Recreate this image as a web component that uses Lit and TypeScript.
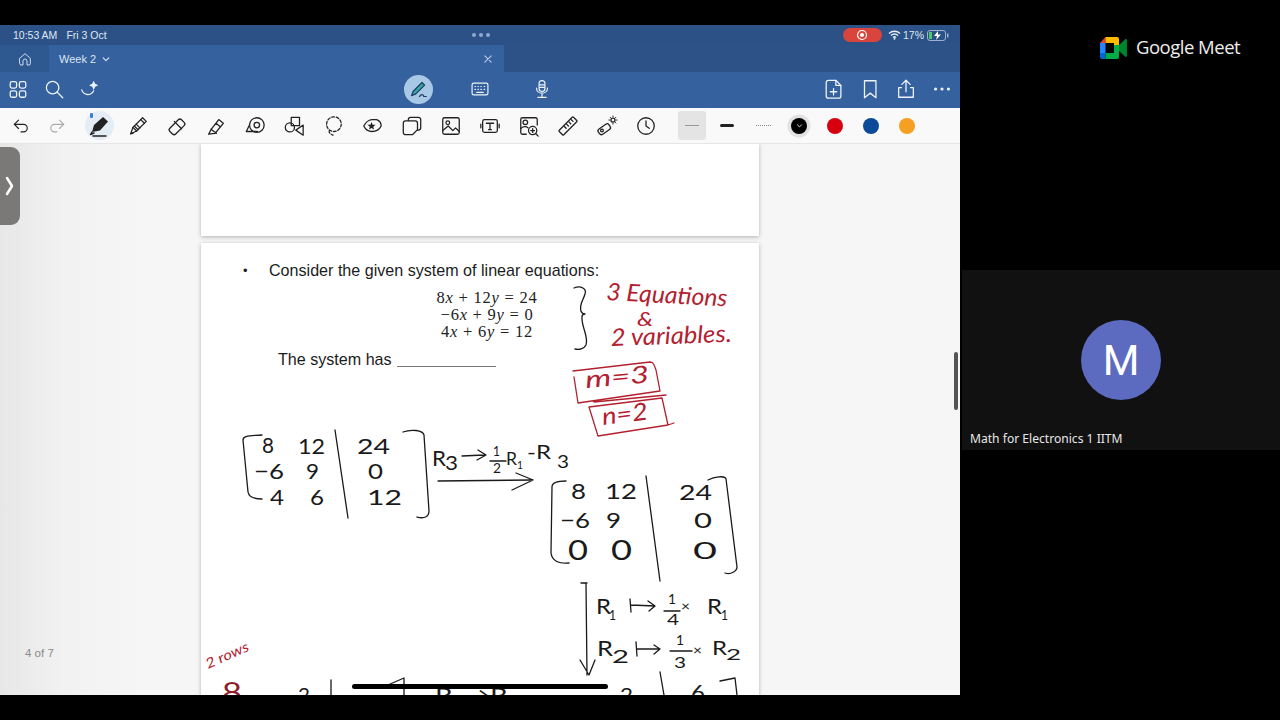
import { LitElement, html, css, svg } from "lit";
import { customElement } from "lit/decorators.js";

const ic = (body: unknown, size = 22, vb = 24) => html`<svg class="ic" width=${size} height=${size} viewBox="0 0 ${vb} ${vb}">${body}</svg>`;

const topLeft = [
  ic(svg`<rect x="3.500" y="4" width="7" height="7" rx="2"/><rect x="13.500" y="4" width="7" height="7" rx="2"/><rect x="3.500" y="14" width="7" height="7" rx="2"/><rect x="13.500" y="14" width="7" height="7" rx="2"/>`),
  ic(svg`<circle cx="10.500" cy="10.500" r="6.800"/><path d="M15.500 15.500l6 6"/>`),
  ic(svg`<path d="M3 13c2 6 10 7 13 1"/><path class="solid" d="M16 3l1.600 3.400L21 8l-3.400 1.600L16 13l-1.600-3.400L11 8l3.400-1.600z"/>`),
];
const topRight = [
  ic(svg`<path d="M6 2.500h8l5.500 5.500v11.500a2.500 2.500 0 0 1-2.500 2.500H6a2.500 2.500 0 0 1-2.500-2.500V5A2.500 2.500 0 0 1 6 2.500z"/><path d="M14 2.500V8h5.500M11.500 11.500v7M8 15h7"/>`),
  ic(svg`<path d="M6 3h12.500v18.500l-6.250-5-6.250 5z"/>`),
  ic(svg`<path d="M12 15V3M7.500 7L12 2.500 16.500 7M7 10.500H4v10.500h16V10.500h-3"/>`),
  ic(svg`<circle class="solid" cx="5" cy="12" r="1.700"/><circle class="solid" cx="12" cy="12" r="1.700"/><circle class="solid" cx="19" cy="12" r="1.700"/>`),
];
const tools = [
  ic(svg`<path d="M9 5L4 10l5 5"/><path d="M4 10h11a4.500 4.500 0 0 1 0 9h-3"/>`, 20),
  ic(svg`<path d="M15 5l5 5-5 5"/><path d="M20 10H9a4.500 4.500 0 0 0 0 9h3"/>`, 20),
];
const tools2 = [
  ic(svg`<path d="M4 20.500l2.500-7L17 3l4 4L10.500 17.500z"/><path d="M4 20.500l3-1M15 5l4 4M6.500 13.500l4 4M10 10l4 4M8 12l4 4"/>`),
  ic(svg`<rect x="3" y="8.500" width="18" height="9" rx="2.500" transform="rotate(-45 12 13)"/><path d="M10 6l8 8" transform="translate(-1 1)"/>`),
  ic(svg`<path d="M4 21l2.500-5 8.500-11 5 4-9 11-5 .5zM6.500 15.500l6 4.500M12 9l5 4"/>`),
  ic(svg`<circle cx="14" cy="11" r="8"/><circle cx="14" cy="11" r="3"/><path d="M6 11l-3.500 7h12"/>`),
  ic(svg`<rect x="9" y="2.500" width="9" height="9"/><circle cx="7.500" cy="13.500" r="5"/><path d="M22 11v11l-8-5.500z"/>`),
  ic(svg`<circle class="dash" cx="13" cy="10" r="8"/><path class="dash" d="M8 17c-1 3 2 4 4 5"/>`),
  ic(svg`<path d="M3 12c2-4 6-7 9-7h5c3 1 5 4 5 7-2 4-6 6-10 6s-7-2-9-6z"/><path class="solid" d="M11.500 7.500l1.200 3 3.200.2-2.500 2 .8 3.100-2.700-1.700-2.700 1.700.8-3.100-2.500-2 3.200-.2z"/>`),
  ic(svg`<path d="M8 6V5a2.500 2.500 0 0 1 2.500-2.500H19A2.500 2.500 0 0 1 21.500 5v9a2.500 2.500 0 0 1-2.500 2.500h-1"/><path d="M5 6.500h10.500A2.500 2.500 0 0 1 18 9v7l-5.500 5.500H5A2.500 2.500 0 0 1 2.500 19V9A2.500 2.500 0 0 1 5 6.500z"/>`),
  ic(svg`<rect x="3" y="3" width="18" height="18" rx="2"/><circle cx="8.500" cy="8.500" r="2"/><path d="M3 17l6-5 5 5 3-3 4 4"/>`),
  ic(svg`<rect x="4" y="5" width="16" height="14" rx="2"/><path d="M8 9h8M12 9v7M10.500 16h3M2 10v4M22 10v4"/>`),
  ic(svg`<path d="M9 21H5a2 2 0 0 1-2-2V5a2 2 0 0 1 2-2h14a2 2 0 0 1 2 2v6"/><circle cx="8" cy="8" r="2.500"/><path d="M3 15c2-3 6-3 8-1"/><circle cx="16" cy="17" r="4.500"/><path d="M14 17h4M16 15v4M19.500 20.500L22 23"/>`),
  ic(svg`<rect x="1" y="8.500" width="22" height="7" rx="1" transform="rotate(-45 12 12)"/><path d="M8 12.500l2 2M10.500 10l2 2M13 7.500l2 2M15.500 5l2 2"/>`),
  ic(svg`<rect x="2" y="12" width="14" height="7" rx="2.500" transform="rotate(-35 9 15.500)"/><circle cx="6.500" cy="17" r="1.500"/><circle cx="18.500" cy="5.500" r="2.200"/><path d="M18.500 1v1M18.500 9v1M14 5.500h1M22 5.500h1M15.500 2.500l.7.7M21 8l.7.7M21.700 2.500l-.7.7" stroke-width="1"/>`),
  ic(svg`<circle cx="12" cy="12" r="9"/><path d="M12 6.500V12l3.500 2.500"/>`),
];

const hw: [number, number, string, number, number, number, string][] = [
  [606, 300, "3 Equations", 24, 121, 3, "red"],
  [637, 326, "&", 20, 16, 0, "red"],
  [611, 346, "2 variables.", 24, 121, -2, "red"],
  [586, 388, "m=3", 24, 64, -5, "red"],
  [603, 425, "n=2", 24, 46, -7, "red"],
  [208, 669, "2 rows", 14, 46, -24, "red"],
  [262, 453, "8", 22, 12, 0, ""],
  [298, 454, "12", 22, 27, 0, ""],
  [357, 454, "24", 22, 33, 0, ""],
  [254, 479, "−6", 22, 30, 0, ""],
  [306, 479, "9", 22, 13, 0, ""],
  [368, 479, "0", 22, 15, 0, ""],
  [270, 505, "4", 22, 14, 0, ""],
  [310, 505, "6", 22, 14, 0, ""],
  [367, 505, "12", 22, 35, 0, ""],
  [432, 466, "R", 22, 14, 0, ""],
  [445, 470, "3", 20, 13, 0, ""],
  [493, 456, "1", 13, 7, 0, ""],
  [493, 473, "2", 13, 8, 0, ""],
  [506, 465, "R", 17, 11, 0, ""],
  [517, 469, "1", 12, 6, 0, ""],
  [527, 459, "-R", 20, 24, 0, ""],
  [557, 468, "3", 18, 12, 0, ""],
  [571, 499, "8", 22, 15, 0, ""],
  [605, 499, "12", 22, 32, 0, ""],
  [679, 500, "24", 22, 33, 0, ""],
  [560, 528, "−6", 22, 30, 0, ""],
  [606, 528, "9", 22, 15, 0, ""],
  [694, 528, "0", 22, 18, 0, ""],
  [568, 560, "0", 26, 20, 0, ""],
  [611, 560, "0", 26, 21, 0, ""],
  [693, 559, "0", 24, 24, 0, ""],
  [596, 614, "R", 21, 15, 0, ""],
  [609, 620, "1", 14, 7, 0, ""],
  [668, 604, "1", 14, 8, 0, ""],
  [667, 625, "4", 15, 12, 0, ""],
  [681, 611, "×", 13, 9, 0, ""],
  [707, 614, "R", 21, 15, 0, ""],
  [721, 620, "1", 14, 7, 0, ""],
  [597, 656, "R", 21, 16, 0, ""],
  [612, 663, "2", 17, 17, 0, ""],
  [676, 645, "1", 13, 8, 0, ""],
  [674, 668, "3", 15, 12, 0, ""],
  [693, 655, "×", 13, 9, 0, ""],
  [712, 655, "R", 20, 15, 0, ""],
  [726, 660, "2", 15, 15, 0, ""],
  [222, 702, "8", 26, 20, 0, "dred"],
  [298, 702, "2", 20, 12, 0, ""],
  [435, 702, "R₂→R₂", 20, 82, 0, ""],
  [620, 702, "2", 20, 13, 0, ""],
  [691, 700, "6", 22, 14, 0, ""],
];

const strokes: [string, string][] = [
  ["M574 288c7-3 13 1 11 6-2 7-6 10-4 17 1 3 4 3 4 3s-3 0-3 3c-1 9 7 20 4 28-2 4-7 5-11 4", ""],
  ["M573 371l77-9c3 0 4 2 6 8l4 21-82 12-4-26M594 402l72-7M589 407l73-9 6 27-70 11-9-29M668 425l6-2", "red"],
  ["M262 435c-10 1-19 0-19 5l5 52c1 6 7 7 14 7M335 430l13 88M403 432c8-3 20-2 21 3l5 76c0 6-5 8-12 6", ""],
  ["M462 456l22-1M478 450l8 5-9 5M490 461h16M438 481l95-1M516 473l17 7-21 10", ""],
  ["M566 481c-7 0-14 1-14 6l-1 66c1 7 6 11 18 10M646 476l14 105M708 480c6-3 17-5 18-1l11 88c0 4-6 8-12 6", ""],
  ["M581 583h6M586 583l1 92M580 660l9 15 6-15", ""],
  ["M630 599l1 13M631 605l24 1M648 601l7 5-6 5M664 611h16", ""],
  ["M636 642l1 14M637 649l23 0M654 645l6 4-6 5M670 651h22", ""],
  ["M331 680v15M381 688l23-10v17M660 672l4 23M720 681l15-3 2 17", ""],
];

@customElement("app-root")
export class AppRoot extends LitElement {
  static styles = css`
    :host { display: block; width: 1280px; height: 720px; background: #000; overflow: hidden; font-family: "Liberation Sans", Arial, sans-serif; }
    .shell { display: flex; width: 1280px; height: 720px; }
    .ipad { width: 960px; display: flex; flex-direction: column; padding: 25px 0; box-sizing: border-box; position: relative; }
    .ic { fill: none; stroke: currentColor; stroke-width: 1.400; stroke-linecap: round; stroke-linejoin: round; display: block; }
    .ic .solid { fill: currentColor; stroke: none; }
    .ic .dash { stroke-dasharray: 3 2; }
    .status { height: 20px; flex: none; display: grid; grid-template-columns: 1fr auto 1fr; align-items: center; background: #2c5187; color: #dfe7f2; font-size: 10.500px; padding: 0 11px 0 13px; }
    .clock { display: flex; gap: 9px; }
    .dots { display: flex; gap: 3px; }
    .dots i { width: 4px; height: 4px; border-radius: 50%; background: #8fa9cc; }
    .sys { display: flex; justify-content: flex-end; align-items: center; gap: 4px; }
    .rec { width: 39px; height: 14px; border-radius: 7px; background: #d9453c; display: flex; align-items: center; justify-content: center; margin-right: 2px; }
    .rec svg, .batt { display: block; }
    .wifi { margin-right: -2px; }
    .pct { margin-right: -1px; }
    .tabs { height: 27px; flex: none; display: flex; background: #2d5288; color: #dbe5f1; }
    .home { width: 49px; background: #2e5890; display: flex; align-items: center; justify-content: center; }
    .tab { width: 455px; background: #35629f; display: flex; align-items: center; padding: 0 12px 0 10px; box-sizing: border-box; font-size: 11px; gap: 6px; }
    .tab .x { margin-left: auto; color: #b9cbe2; }
    .bar { height: 36px; flex: none; display: flex; align-items: center; background: #35629f; color: #eef3f9; padding-bottom: 2px; box-sizing: border-box; }
    .slot { width: 36px; display: flex; justify-content: center; align-items: center; }
    .slot.mid { width: 62px; }
    .center { display: flex; margin-left: 279px; }
    .right { display: flex; margin-left: auto; }
    .pencirc { width: 29px; height: 29px; border-radius: 50%; background: #a9c8e6; display: flex; align-items: center; justify-content: center; color: #1d3d62; }
    .tools { height: 36px; flex: none; display: flex; align-items: center; background: #f9f9f9; color: #222; padding-left: 3px; border-bottom: 1px solid #e6e6e6; box-sizing: border-box; }
    .tools .redo { color: #aaa; }
    .tools .t { width: 39.070px; display: flex; justify-content: center; align-items: center; }
    .penwrap { margin-left: 4.500px; position: relative; }
    .pencur { width: 29px; height: 29px; border-radius: 50%; background: #e4ecf6; display: flex; align-items: center; justify-content: center; position: relative; }
    .bt { position: absolute; left: 5px; top: 2px; width: 3px; height: 5px; border-radius: 1px; background: #3f7fd0; }
    .sel { width: 28px; height: 29px; margin: 0 3px 0 13px; border-radius: 3px; background: #e4e4e4; display: flex; align-items: center; justify-content: center; }
    .sel i { width: 14px; height: 1px; background: #999; }
    .thick { width: 14px; height: 3px; border-radius: 2px; background: #222; }
    .dotted { width: 15px; border-top: 1px dotted #888; }
    .blackc { width: 16px; height: 16px; border-radius: 50%; background: #000; box-shadow: 0 0 0 3.500px #e2e2e2; color: #ddd; display: flex; align-items: center; justify-content: center; }
    .col { width: 16px; height: 16px; border-radius: 50%; }
    .doc { flex: 1; min-height: 0; position: relative; overflow: hidden; background: linear-gradient(90deg, #e7e7e7 0, #f1f1f1 60px, #f6f6f6 140px); display: flex; flex-direction: column; align-items: center; gap: 7px; }
    .page { width: 558px; flex: none; background: #fff; box-shadow: 0 1px 4px rgba(0,0,0,.28); position: relative; box-sizing: border-box; color: #1c1c1c; }
    .p1 { height: 92px; }
    .p2 { height: 480px; padding: 18px 0 0 42px; }
    .bullet { display: flex; align-items: center; font-size: 16.100px; line-height: 19px; }
    .bullet b { width: 26px; font-weight: normal; font-size: 13px; }
    .eqs { margin: 9px 0 0 0; width: 488px; text-align: center; font-family: "Liberation Serif", serif; font-size: 16.500px; letter-spacing: .75px; line-height: 17px; color: #222; }
    .eqs em { font-style: italic; }
    .sys-has { margin: 10px 0 0 35px; font-size: 16.100px; line-height: 19px; display: flex; }
    .blank { width: 99px; height: 16px; margin-left: 5px; border-bottom: 1px solid #777; }
    .ink { position: absolute; left: 0; top: 0; width: 558px; height: 452px; overflow: hidden; }
    .ink path { fill: none; stroke: #1a1a1a; stroke-width: 1.300; stroke-linecap: round; stroke-linejoin: round; }
    .ink path.red { stroke: #b3202f; }
    .ink text { font-family: Lato, "Open Sans", sans-serif; font-weight: 400; fill: #1a1a1a; }
    .ink text.red { fill: #b3202f; font-style: italic; }
    .ink text.dred { fill: #8c1f2b; }
    .handle { position: absolute; left: 0; top: 3px; width: 20px; height: 78px; border-radius: 0 9px 9px 0; background: #7a7977; display: flex; align-items: center; justify-content: center; color: #fff; }
    .count { position: absolute; left: 25px; top: 503px; font-size: 11.500px; color: #8a8a8a; }
    .scroll { position: absolute; left: 954px; top: 352px; width: 4px; height: 58px; border-radius: 2px; background: #555; }
    .indicator { position: absolute; left: 352px; top: 684px; width: 256px; height: 5px; border-radius: 3px; background: #000; }
    .meet { width: 320px; position: relative; padding-top: 270px; box-sizing: border-box; }
    .brand { position: absolute; left: 140px; top: 34px; display: flex; align-items: center; gap: 9px; color: #eee; font-family: "Open Sans", sans-serif; font-size: 18.500px; letter-spacing: -.5px; }
    .brand svg { margin-top: 2px; }
    .tile { margin-left: 2px; height: 180px; background: #111; position: relative; display: flex; align-items: center; justify-content: center; }
    .avatar { width: 80px; height: 80px; border-radius: 50%; background: #5c6bc0; color: #fff; font-family: Roboto, sans-serif; font-size: 42px; display: flex; align-items: center; justify-content: center; }
    .name { position: absolute; left: 8px; top: 161px; color: #e8e8e8; font-family: "Noto Sans", sans-serif; font-size: 12.100px; line-height: 16px; }
  `;

  render() {
    const chev = html`<svg class="ic" width="8" height="8" viewBox="0 0 10 10"><path d="M1.500 3.500L5 7l3.500-3.500"/></svg>`;
    return html`<div class="shell">
      <div class="ipad">
        <div class="status">
          <div class="clock"><span>10:53 AM</span><span>Fri 3 Oct</span></div>
          <div class="dots"><i></i><i></i><i></i></div>
          <div class="sys">
            <div class="rec"><svg width="12" height="12" viewBox="0 0 12 12"><circle cx="6" cy="6" r="4.500" fill="none" stroke="#fff" stroke-width="1.200"/><circle cx="6" cy="6" r="2" fill="#fff"/></svg></div>
            <svg class="wifi" width="13" height="10" viewBox="0 0 13 10"><path d="M1 3.500c3-3 8-3 11 0M3 5.500c2-2 5-2 7 0M5 7.500c1-1 2-1 3 0" fill="none" stroke="#e5ecf5" stroke-width="1.300"/><circle cx="6.500" cy="8.800" r="1" fill="#e5ecf5"/></svg>
            <span class="pct">17%</span>
            <svg class="batt" width="22" height="11" viewBox="0 0 22 11"><rect x=".5" y=".5" width="18" height="10" rx="2.500" fill="none" stroke="#9db2cf"/><rect x="2" y="2" width="3" height="7" fill="#4fc66a"/><path d="M11 1L7 6h3l-1 4 5-5.500h-3z" fill="#fff"/><rect x="20" y="3.500" width="1.500" height="4" fill="#9db2cf"/></svg>
          </div>
        </div>
        <div class="tabs">
          <div class="home">${ic(svg`<path d="M4 11l8-7 8 7v8a2 2 0 0 1-2 2h-3v-6a3 3 0 0 0-6 0v6H6a2 2 0 0 1-2-2z"/>`, 16)}</div>
          <div class="tab"><span>Week 2</span>${chev}
            <svg class="ic x" width="8" height="8" viewBox="0 0 10 10"><path d="M1 1l8 8M9 1l-8 8"/></svg></div>
        </div>
        <div class="bar">
          ${topLeft.map((i) => html`<div class="slot">${i}</div>`)}
          <div class="center">
            <div class="slot mid"><div class="pencirc">${ic(svg`<path d="M4 19l2-5L16 4l3 3L9 17z" fill="#37a6a8"/><path d="M13 20c2-3 5-3 5 0h3"/>`, 21)}</div></div>
            <div class="slot mid">${ic(svg`<rect x="2.500" y="5" width="19" height="14" rx="2"/><path d="M6 9h.5M9.500 9h.5M13 9h.5M17 9h.5M6 12.500h.5M9.500 12.500h.5M13 12.500h.5M17 12.500h.5M8 16h8"/>`, 20)}</div>
            <div class="slot mid">${ic(svg`<rect x="8.500" y="2" width="7" height="13" rx="3.500"/><path d="M5.500 11c0 8 13 8 13 0M12 18v3M7 22h10M9 7h6M9 10h6"/>`, 20)}</div>
          </div>
          <div class="right">${topRight.map((i) => html`<div class="slot">${i}</div>`)}</div>
        </div>
        <div class="tools">
          <div class="slot">${tools[0]}</div>
          <div class="slot redo">${tools[1]}</div>
          <div class="t penwrap"><div class="pencur"><span class="bt"></span>${ic(svg`<path class="solid" d="M5 18l2-7 9-8 5 4.500-8 9z"/><path d="M5 18l-1.500 2.500L7 19M6 22h13"/>`, 24)}</div></div>
          ${tools2.map((i) => html`<div class="t">${i}</div>`)}
          <div class="sel"><i></i></div>
          <div class="slot"><div class="thick"></div></div>
          <div class="slot"><div class="dotted"></div></div>
          <div class="slot"><div class="blackc"><svg class="ic" width="7" height="7" viewBox="0 0 10 10"><path d="M2 4l3 3 3-3"/></svg></div></div>
          <div class="slot"><div class="col" style="background:#d7000f"></div></div>
          <div class="slot"><div class="col" style="background:#0a4a98"></div></div>
          <div class="slot"><div class="col" style="background:#f5a023"></div></div>
        </div>
        <div class="doc">
          <div class="page p1"></div>
          <div class="page p2">
            <div class="bullet"><b>•</b><span>Consider the given system of linear equations:</span></div>
            <div class="eqs">
              <div>8<em>x</em> + 12<em>y</em> = 24</div>
              <div>−6<em>x</em> + 9<em>y</em> = 0</div>
              <div>4<em>x</em> + 6<em>y</em> = 12</div>
            </div>
            <div class="sys-has"><span>The system has</span><span class="blank"></span></div>
            <svg class="ink" viewBox="201 243 558 452">
              ${strokes.map(([d, c]) => svg`<path d=${d} class=${c}/>`)}
              ${hw.map(([x, y, t, s, w, r, c]) => svg`<text x=${x} y=${y} font-size=${s} textLength=${w} lengthAdjust="spacingAndGlyphs" class=${c} transform="rotate(${r} ${x} ${y})">${t}</text>`)}
            </svg>
          </div>
          <div class="handle"><svg class="ic" width="10" height="20" viewBox="0 0 10 20" style="stroke-width:2.500"><path d="M2 2l5 8-5 8"/></svg></div>
          <div class="count">4 of 7</div>
        </div>
        <div class="scroll"></div>
        <div class="indicator"></div>
      </div>
      <div class="meet">
        <div class="brand">
          <svg width="27" height="22" viewBox="0 0 27 22">
            <path d="M5.500 0v6H0z" fill="#ea4335"/>
            <path d="M0 6h5.500v10H0z" fill="#2684fc"/>
            <path d="M0 16h5.500v6H2a2 2 0 0 1-2-2z" fill="#0066da"/>
            <path d="M5.500 0H17a2 2 0 0 1 2 2v6l-5 0V6H5.500z" fill="#ffba00"/>
            <path d="M5.500 16H14v-8h5v12a2 2 0 0 1-2 2H5.500z" fill="#00ac47"/>
            <path d="M19 8l6-5.500c1-.8 2-.3 2 1v15c0 1.300-1 1.800-2 1L19 14z" fill="#00832d"/>
          </svg>
          <span>Google Meet</span>
        </div>
        <div class="tile">
          <div class="avatar">M</div>
          <div class="name">Math for Electronics 1 IITM</div>
        </div>
      </div>
    </div>`;
  }
}
